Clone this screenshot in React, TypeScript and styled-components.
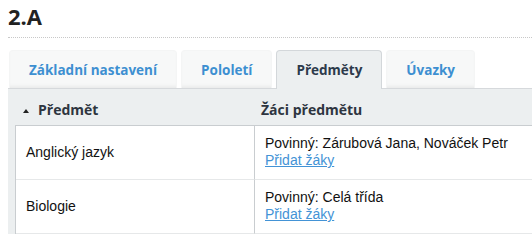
import React from "react";
import styled, { createGlobalStyle } from "styled-components";

const Global = createGlobalStyle`
  html, body { margin: 0; padding: 0; background: #fff; }
  body { font-family: "Liberation Sans", Arial, sans-serif; color: #222; overflow: hidden; }
`;

const Page = styled.div`
  padding: 0 0 0 8px;
  width: 524px;
`;

const Title = styled.h1`
  margin: 0;
  padding: 1px 0 6px;
  font-family: "Open Sans", sans-serif;
  font-weight: 700;
  font-size: 22px;
  line-height: 30px;
  color: #222;
  border-bottom: 1px dotted #c8c8c8;
`;

const TabBar = styled.div`
  display: flex;
  align-items: flex-end;
  margin-top: 12px;
  padding-left: 1px;
  position: relative;
  z-index: 1;
`;

const Tab = styled.div<{ $active?: boolean }>`
  font-family: "Open Sans", sans-serif;
  font-weight: 700;
  font-size: 13.5px;
  line-height: 19px;
  padding: 10px 19px 8px;
  margin-right: 4px;
  border: 1px solid ${(p) => (p.$active ? "#d3d7da" : "#f4f5f5")};
  border-bottom: none;
  border-radius: 4px 4px 0 0;
  background: ${(p) => (p.$active ? "#eceff0" : "#f7f8f8")};
  color: ${(p) => (p.$active ? "#2c3a4b" : "#3d8fd1")};
  box-shadow: ${(p) =>
    p.$active ? "none" : "inset 0 -4px 4px -3px rgba(0,0,0,0.08)"};
  margin-bottom: ${(p) => (p.$active ? "-1px" : "0")};
  padding-bottom: ${(p) => (p.$active ? "9px" : "8px")};
`;

const Panel = styled.div`
  background: #eceff0;
  border-top: 1px solid #d6d9dc;
  padding: 0 0 0 7px;
`;

const Grid = styled.div`
  display: grid;
  grid-template-columns: 240px 1fr;
`;

const HeadCell = styled.div<{ $first?: boolean }>`
  display: flex;
  align-items: center;
  font-family: "Open Sans", sans-serif;
  font-weight: 700;
  font-size: 14px;
  line-height: 19px;
  color: #2e3540;
  padding: 11px 6px 6px ${(p) => (p.$first ? "8px" : "6px")};
`;

const SortArrow = styled.span`
  display: inline-block;
  width: 0;
  height: 0;
  border-left: 3px solid transparent;
  border-right: 3px solid transparent;
  border-bottom: 4px solid #222;
  margin: 2px 9px 0 0;
`;

const Body = styled.div`
  background: #fff;
  border-left: 1px solid #c9cdd0;
  border-top: 1px solid #c9cdd0;
  display: grid;
  grid-template-columns: 239px 1fr;
`;

const Cell = styled.div<{ $first?: boolean }>`
  font-size: 14px;
  line-height: 17px;
  color: #111;
  padding: 9px 10px 10px;
  border-bottom: 1px solid #e6e8e9;
  border-right: ${(p) => (p.$first ? "1px solid #c9cdd0" : "none")};
  display: flex;
  flex-direction: column;
  justify-content: ${(p) => (p.$first ? "center" : "flex-start")};
`;

const Link = styled.a`
  color: #4393d6;
  text-decoration: underline;
  cursor: pointer;
`;

const rows = [
  { subject: "Anglický jazyk", students: "Povinný: Zárubová Jana, Nováček Petr" },
  { subject: "Biologie", students: "Povinný: Celá třída" },
];

export default function App() {
  return (
    <>
      <Global />
      <Page>
        <Title>2.A</Title>
        <TabBar>
          <Tab>Základní nastavení</Tab>
          <Tab>Pololetí</Tab>
          <Tab $active>Předměty</Tab>
          <Tab>Úvazky</Tab>
        </TabBar>
        <Panel>
          <Grid>
            <HeadCell $first>
              <SortArrow />
              Předmět
            </HeadCell>
            <HeadCell>Žáci předmětu</HeadCell>
          </Grid>
          <Body>
            {rows.map((r) => (
              <React.Fragment key={r.subject}>
                <Cell $first>{r.subject}</Cell>
                <Cell>
                  <span>{r.students}</span>
                  <span>
                    <Link>Přidat žáky</Link>
                  </span>
                </Cell>
              </React.Fragment>
            ))}
          </Body>
        </Panel>
      </Page>
    </>
  );
}
